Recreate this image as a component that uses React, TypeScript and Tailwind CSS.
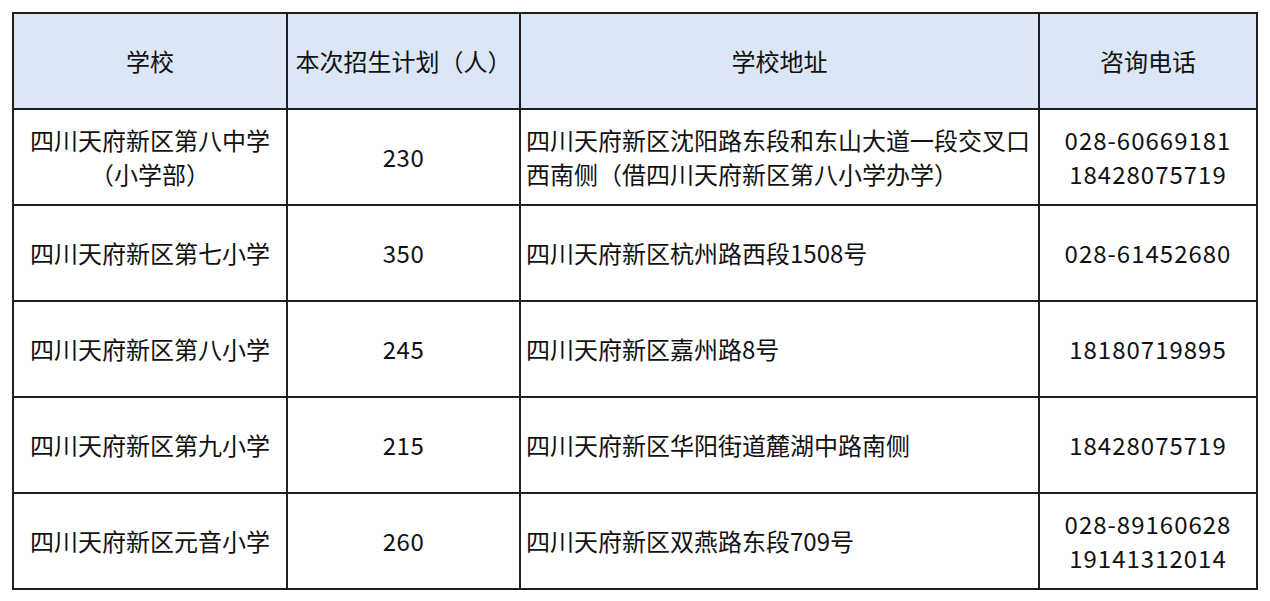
const rows = [
  { name: ["四川天府新区第八中学", "（小学部）"], plan: "230", addr: ["四川天府新区沈阳路东段和东山大道一段交叉口", "西南侧（借四川天府新区第八小学办学）"], tel: ["028-60669181", "18428075719"] },
  { name: ["四川天府新区第七小学"], plan: "350", addr: ["四川天府新区杭州路西段1508号"], tel: ["028-61452680"] },
  { name: ["四川天府新区第八小学"], plan: "245", addr: ["四川天府新区嘉州路8号"], tel: ["18180719895"] },
  { name: ["四川天府新区第九小学"], plan: "215", addr: ["四川天府新区华阳街道麓湖中路南侧"], tel: ["18428075719"] },
  { name: ["四川天府新区元音小学"], plan: "260", addr: ["四川天府新区双燕路东段709号"], tel: ["028-89160628", "19141312014"] },
];

function Lines({ items }: { items: string[] }) {
  return (
    <>
      {items.map((t, i) => (
        <div key={i}>{t}</div>
      ))}
    </>
  );
}

export default function App() {
  const cell = "border-2 border-[#1f1f1f] h-[96px] p-0 align-middle";
  return (
    <div className="min-h-[601px] w-[1270px] bg-white pl-[12px] pt-[12px] text-[24px] leading-[34px] text-[#111] [font-family:'Noto_Sans_CJK_SC','Noto_Sans',sans-serif]">
      <table className="w-[1244px] table-fixed border-collapse">
        <colgroup>
          <col className="w-[274px]" />
          <col className="w-[233px]" />
          <col className="w-[519px]" />
          <col className="w-[218px]" />
        </colgroup>
        <thead>
          <tr className="bg-[#dbe7f6]">
            <th className={`${cell} text-center font-normal`}>学校</th>
            <th className={`${cell} text-center font-normal`}>本次招生计划（人）</th>
            <th className={`${cell} text-center font-normal`}>学校地址</th>
            <th className={`${cell} text-center font-normal`}>咨询电话</th>
          </tr>
        </thead>
        <tbody>
          {rows.map((r, i) => (
            <tr key={i}>
              <td className={`${cell} text-center`}><Lines items={r.name} /></td>
              <td className={`${cell} text-center tracking-[0.5px]`}>{r.plan}</td>
              <td className={`${cell} pl-[5px] text-left`}><Lines items={r.addr} /></td>
              <td className={`${cell} text-center tracking-[1px]`}><Lines items={r.tel} /></td>
            </tr>
          ))}
        </tbody>
      </table>
    </div>
  );
}
